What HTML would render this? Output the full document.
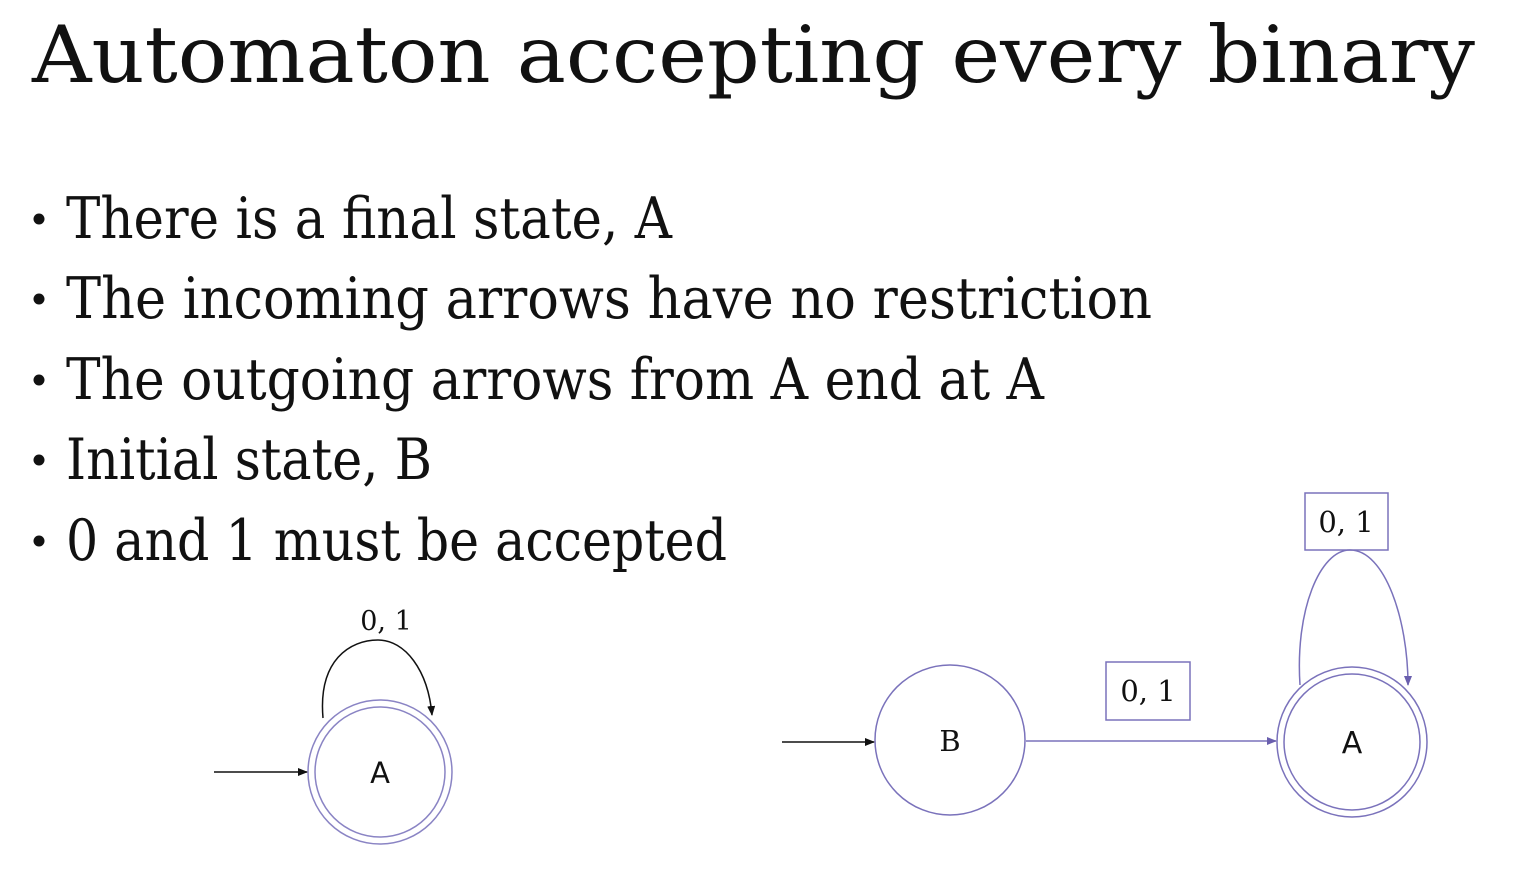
<!DOCTYPE html>
<html><head><meta charset="utf-8"><style>
html,body{margin:0;padding:0;background:#fff;width:1528px;height:873px;overflow:hidden}
svg{display:block}
</style></head><body>
<svg width="1528" height="873" viewBox="0 0 1528 873" xmlns="http://www.w3.org/2000/svg">
<defs>
<marker id="ab" markerWidth="10" markerHeight="8" refX="9" refY="4" orient="auto" markerUnits="userSpaceOnUse"><path d="M0,0 L10,4 L0,8 Z" fill="#111"/></marker>
<marker id="ap" markerWidth="10" markerHeight="8" refX="9" refY="4" orient="auto" markerUnits="userSpaceOnUse"><path d="M0,0 L10,4 L0,8 Z" fill="#6a5fae"/></marker>
</defs>
<g font-family="DejaVu Serif, serif" fill="#111">
<text x="32" y="82" font-size="79" textLength="1443" lengthAdjust="spacingAndGlyphs">Automaton accepting every binary</text>
<g font-size="57">
<circle cx="39" cy="219" r="5.5"/><text x="66" y="238" textLength="606" lengthAdjust="spacingAndGlyphs">There is a final state, A</text>
<circle cx="39" cy="299" r="5.5"/><text x="66" y="318" textLength="1086" lengthAdjust="spacingAndGlyphs">The incoming arrows have no restriction</text>
<circle cx="39" cy="380" r="5.5"/><text x="66" y="399" textLength="978" lengthAdjust="spacingAndGlyphs">The outgoing arrows from A end at A</text>
<circle cx="39" cy="460" r="5.5"/><text x="66" y="479" textLength="366" lengthAdjust="spacingAndGlyphs">Initial state, B</text>
<circle cx="39" cy="541" r="5.5"/><text x="66" y="560" textLength="661" lengthAdjust="spacingAndGlyphs">0 and 1 must be accepted</text>
</g>
</g>
<!-- diagram 1 -->
<g fill="none" stroke-width="1.5">
<circle cx="380" cy="772" r="72" stroke="#8a84c4"/>
<circle cx="380" cy="772" r="65" stroke="#8a84c4"/>
<line x1="214" y1="772" x2="307" y2="772" stroke="#111" marker-end="url(#ab)"/>
<path d="M323,718 C318,660 350,640 378,640 C405,640 428,670 432,715" stroke="#111" marker-end="url(#ab)"/>
</g>
<text x="386" y="630" font-family="DejaVu Serif, serif" font-size="27" text-anchor="middle" fill="#111">0, 1</text>
<text x="380" y="783" font-family="DejaVu Sans, sans-serif" font-size="29" text-anchor="middle" fill="#111">A</text>
<!-- diagram 2 -->
<g fill="none" stroke-width="1.5" stroke="#7a72bb">
<circle cx="950" cy="740" r="75"/>
<line x1="782" y1="742" x2="874" y2="742" stroke="#111" marker-end="url(#ab)"/>
<line x1="1026" y1="741" x2="1276" y2="741" marker-end="url(#ap)"/>
<rect x="1106" y="662" width="84" height="58"/>
<circle cx="1352" cy="742" r="75"/>
<circle cx="1352" cy="742" r="68"/>
<rect x="1305" y="493" width="83" height="57"/>
<path d="M1300,685 C1295,610 1320,550 1350,550 C1385,550 1408,620 1408,685" marker-end="url(#ap)"/>
</g>
<g font-family="DejaVu Serif, serif" font-size="29" text-anchor="middle" fill="#111">
<text x="950" y="751">B</text>
<text x="1148" y="701">0, 1</text>
<text x="1346" y="532">0, 1</text>
</g>
<text x="1352" y="753" font-family="DejaVu Sans, sans-serif" font-size="30" text-anchor="middle" fill="#111">A</text>
</svg>
</body></html>
